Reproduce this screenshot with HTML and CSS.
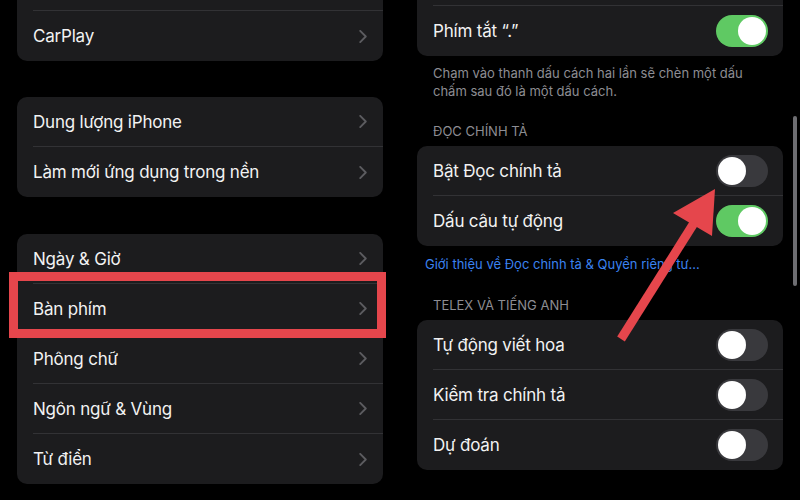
FILE: index.html
```html
<!DOCTYPE html>
<html lang="vi">
<head>
    <meta charset="UTF-8">
    <meta name="viewport" content="width=device-width, initial-scale=1.0">
    <title>Cài đặt - Bàn phím</title>
    <link rel="stylesheet" href="styles.css">
</head>
<body>
    <div class="screens">
        <!-- Cài đặt chung -->
        <div class="screen">
            <div class="group first-left">
                <div class="row"></div>
                <div class="row"><span class="label">CarPlay</span><svg class="chevron" viewBox="0 0 8 14"><polyline points="1,1 7,7 1,13"/></svg></div>
            </div>

            <div class="group storage">
                <div class="row"><span class="label">Dung lượng iPhone</span><svg class="chevron" viewBox="0 0 8 14"><polyline points="1,1 7,7 1,13"/></svg></div>
                <div class="row"><span class="label">Làm mới ứng dụng trong nền</span><svg class="chevron" viewBox="0 0 8 14"><polyline points="1,1 7,7 1,13"/></svg></div>
            </div>

            <div class="group">
                <div class="row"><span class="label">Ngày &amp; Giờ</span><svg class="chevron" viewBox="0 0 8 14"><polyline points="1,1 7,7 1,13"/></svg></div>
                <div class="row marked"><span class="label">Bàn phím</span><svg class="chevron" viewBox="0 0 8 14"><polyline points="1,1 7,7 1,13"/></svg></div>
                <div class="row"><span class="label">Phông chữ</span><svg class="chevron" viewBox="0 0 8 14"><polyline points="1,1 7,7 1,13"/></svg></div>
                <div class="row"><span class="label">Ngôn ngữ &amp; Vùng</span><svg class="chevron" viewBox="0 0 8 14"><polyline points="1,1 7,7 1,13"/></svg></div>
                <div class="row"><span class="label">Từ điển</span><svg class="chevron" viewBox="0 0 8 14"><polyline points="1,1 7,7 1,13"/></svg></div>
            </div>
        </div>

        <!-- Bàn phím -->
        <div class="screen">
            <div class="group first-right">
                <div class="row"></div>
                <div class="row"><span class="label">Phím tắt “.”</span><span class="switch on"></span></div>
            </div>
            <p class="footer">Chạm vào thanh dấu cách hai lần sẽ chèn một dấu chấm sau đó là một dấu cách.</p>

            <h3 class="header">ĐỌC CHÍNH TẢ</h3>
            <div class="group">
                <div class="row"><span class="label">Bật Đọc chính tả</span><span class="switch"></span></div>
                <div class="row"><span class="label">Dấu câu tự động</span><span class="switch on"></span></div>
            </div>
            <p class="link">Giới thiệu về Đọc chính tả &amp; Quyền riêng tư...</p>

            <h3 class="header">TELEX VÀ TIẾNG ANH</h3>
            <div class="group">
                <div class="row"><span class="label">Tự động viết hoa</span><span class="switch"></span></div>
                <div class="row"><span class="label">Kiểm tra chính tả</span><span class="switch"></span></div>
                <div class="row"><span class="label">Dự đoán</span><span class="switch"></span></div>
            </div>
        </div>
    </div>

    <div class="scroll-bar"></div>

    <svg class="arrow" viewBox="0 0 800 500" width="800" height="500">
        <line x1="621" y1="339" x2="694" y2="223"/>
        <polygon points="715,189 673,213 712,236"/>
    </svg>
</body>
</html>
```

FILE: styles.css
```css
body {
    margin: 0;
    background-color: #000;
    font-family: 'Inter', 'Noto Sans', sans-serif;
    color: #f2f2f2;
    overflow: hidden;
}

.screens {
    display: grid;
    grid-template-columns: 400px 400px;
    height: 500px;
    overflow: hidden;
}

.screen {
    padding: 0 17px;
}

.group {
    background-color: #1c1c1e;
    border-radius: 10px;
    margin-bottom: 36px;
}

.first-left {
    margin-top: -39px;
}

.storage {
    margin-bottom: 37px;
}

.first-right {
    margin-top: -44px;
    margin-bottom: 0;
}

.row {
    position: relative;
    display: flex;
    align-items: center;
    justify-content: space-between;
    box-sizing: border-box;
    height: 50px;
    margin-left: 16px;
    padding-right: 16px;
    border-bottom: 1px solid #323235;
}

.row:last-child {
    border-bottom: none;
}

.label {
    font-size: 17px;
    letter-spacing: -0.2px;
}

.chevron {
    width: 8px;
    height: 13px;
}

.chevron polyline {
    fill: none;
    stroke: #5c5c60;
    stroke-width: 2;
    stroke-linecap: round;
    stroke-linejoin: round;
}

.marked::after {
    content: "";
    position: absolute;
    left: -24px;
    right: -3px;
    top: -12px;
    bottom: -5px;
    border: 9px solid #e5464c;
}

.switch {
    position: relative;
    width: 52px;
    height: 32px;
    border-radius: 16px;
    background-color: #39393d;
    margin-right: -1px;
}

.switch::after {
    content: "";
    position: absolute;
    top: 2px;
    left: 2px;
    width: 28px;
    height: 28px;
    border-radius: 50%;
    background-color: #fff;
}

.switch.on {
    background-color: #5fc963;
}

.switch.on::after {
    left: 22px;
}

.footer {
    margin: 8px 0 0;
    padding: 0 16px;
    font-size: 13px;
    line-height: 18px;
    color: #8d8d93;
}

.header {
    margin: 23px 0 7px;
    padding: 0 16px;
    font-size: 13px;
    font-weight: normal;
    line-height: 16px;
    color: #8d8d93;
}

.header + .group {
    margin-bottom: 0;
}

.link {
    margin: 9px 0 24px;
    padding: 0 8px;
    font-size: 13px;
    line-height: 18px;
    color: #3b82f0;
}

.scroll-bar {
    position: absolute;
    left: 793px;
    top: 116px;
    width: 4px;
    height: 170px;
    border-radius: 2px;
    background-color: #6e6e72;
}

.arrow {
    position: absolute;
    top: 0;
    left: 0;
    pointer-events: none;
}

.arrow line {
    stroke: #e5464c;
    stroke-width: 9;
}

.arrow polygon {
    fill: #e5464c;
}
```
